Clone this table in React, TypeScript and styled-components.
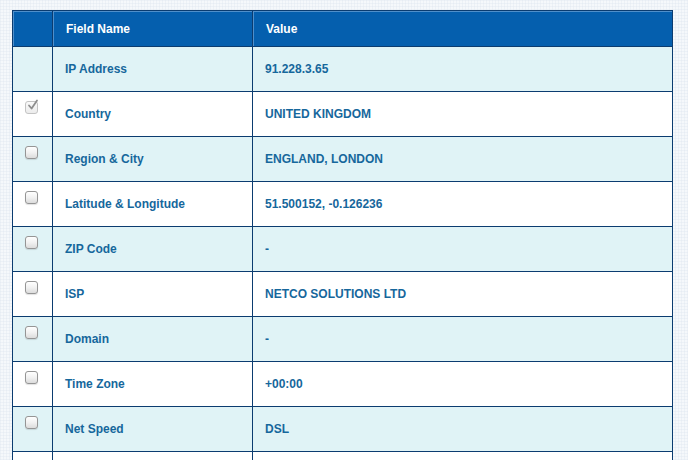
import React from "react";
import styled, { createGlobalStyle } from "styled-components";

const GlobalStyle = createGlobalStyle`
  html, body {
    margin: 0;
    padding: 0;
    background-color: #f5f8fb;
    background-image:
      repeating-linear-gradient(0deg, rgba(220,228,238,0.35) 0 1px, transparent 1px 3px),
      repeating-linear-gradient(90deg, rgba(220,228,238,0.35) 0 1px, transparent 1px 3px);
    font-family: "Liberation Sans", Arial, Helvetica, sans-serif;
  }
`;

const Page = styled.div`
  padding: 10px 0 0 12px;
  height: 450px;
  overflow: hidden;
`;

const Table = styled.table`
  width: 661px;
  border-collapse: collapse;
  table-layout: fixed;
  font-size: 12px;
  font-weight: bold;
`;

const HeadCell = styled.th<{ $w?: number }>`
  box-sizing: border-box;
  ${(p) => (p.$w ? `width: ${p.$w}px;` : "")}
  height: 36px;
  padding: 0 0 0 13px;
  background: #055fae;
  color: #ffffff;
  text-align: left;
  border: 1px solid #0b3c70;
  box-shadow: inset 1px 1px 0 #4f8fcb;
  vertical-align: middle;
`;

const Row = styled.tr<{ $alt: boolean }>`
  background: ${(p) => (p.$alt ? "#e0f3f6" : "#ffffff")};
`;

const Cell = styled.td`
  height: 44px;
  padding: 0 0 0 12px;
  color: #16679c;
  border: 1px solid #0b3c70;
  vertical-align: middle;
  white-space: nowrap;
`;

const BoxCell = styled.td`
  height: 44px;
  padding: 9px 0 0 12px;
  box-sizing: border-box;
  border: 1px solid #0b3c70;
  vertical-align: top;
`;

const Box = styled.span<{ $checked?: boolean }>`
  position: relative;
  display: block;
  width: 11px;
  height: 11px;
  border: 1px solid ${(p) => (p.$checked ? "#c4c4c4" : "#959595")};
  border-radius: 3px;
  background: ${(p) =>
    p.$checked
      ? "linear-gradient(#fafafa, #ececec)"
      : "linear-gradient(#ffffff 0%, #f1f1f1 50%, #dcdcdc 100%)"};
  box-shadow: ${(p) => (p.$checked ? "none" : "0 1px 1px rgba(0,0,0,0.12)")};
`;

const Check = styled.svg`
  position: absolute;
  left: 1px;
  top: -3px;
`;

type Item = { name: string; value: string; box: "none" | "checked" | "empty" };

const rows: Item[] = [
  { name: "IP Address", value: "91.228.3.65", box: "none" },
  { name: "Country", value: "UNITED KINGDOM", box: "checked" },
  { name: "Region & City", value: "ENGLAND, LONDON", box: "empty" },
  { name: "Latitude & Longitude", value: "51.500152, -0.126236", box: "empty" },
  { name: "ZIP Code", value: "-", box: "empty" },
  { name: "ISP", value: "NETCO SOLUTIONS LTD", box: "empty" },
  { name: "Domain", value: "-", box: "empty" },
  { name: "Time Zone", value: "+00:00", box: "empty" },
  { name: "Net Speed", value: "DSL", box: "empty" },
  { name: "", value: "", box: "none" },
];

export default function App() {
  return (
    <>
      <GlobalStyle />
      <Page>
        <Table>
          <thead>
            <tr>
              <HeadCell $w={40} />
              <HeadCell $w={200}>Field Name</HeadCell>
              <HeadCell>Value</HeadCell>
            </tr>
          </thead>
          <tbody>
            {rows.map((r, i) => (
              <Row key={i} $alt={i % 2 === 0}>
                <BoxCell>
                  {r.box !== "none" && (
                    <Box $checked={r.box === "checked"}>
                      {r.box === "checked" && (
                        <Check width="12" height="12" viewBox="0 0 12 12">
                          <path
                            d="M2 6.5 L4.6 9.5 L10 1.5"
                            fill="none"
                            stroke="#8e8e8e"
                            strokeWidth="1.8"
                            strokeLinecap="round"
                            strokeLinejoin="round"
                          />
                        </Check>
                      )}
                    </Box>
                  )}
                </BoxCell>
                <Cell>{r.name}</Cell>
                <Cell>{r.value}</Cell>
              </Row>
            ))}
          </tbody>
        </Table>
      </Page>
    </>
  );
}
